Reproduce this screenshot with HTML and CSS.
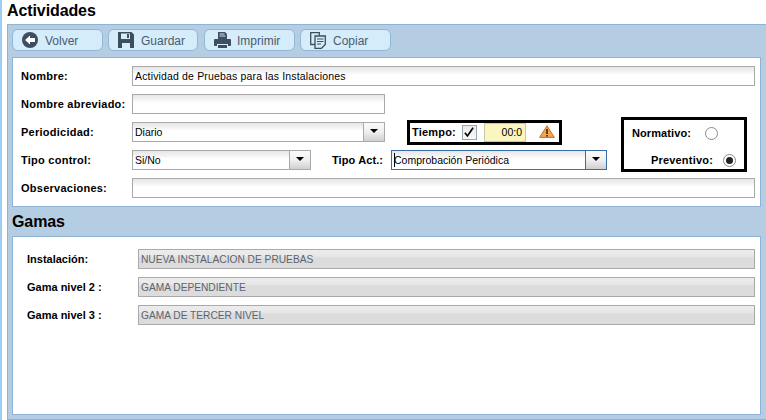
FILE: index.html
```html
<!DOCTYPE html>
<html lang="es">
<head>
<meta charset="utf-8">
<title>Actividades</title>
<link rel="stylesheet" href="styles.css">
</head>
<body>
<div class="page">
  <h1 class="page-title">Actividades</h1>
  <div class="panel">
    <div class="toolbar">
      <button class="tool tool-volver" type="button">
        <svg class="tool-icon" viewBox="0 0 16 16" width="16" height="16"><circle cx="8" cy="8" r="8" fill="#3d4e63"/><path d="M3 8l5-4.6V6h5v4H8v2.6z" fill="#fff"/></svg>
        <span class="tool-text">Volver</span>
      </button>
      <button class="tool tool-guardar" type="button">
        <svg class="tool-icon" viewBox="0 0 16 16" width="16" height="16"><path fill-rule="evenodd" d="M0 0h13.5L16 2.5V16H0zM3 1.500V7h9V1.500zM4 11v5h8v-5z" fill="#3d4e63"/><rect x="9" y="2" width="2" height="4" fill="#3d4e63"/></svg>
        <span class="tool-text">Guardar</span>
      </button>
      <button class="tool tool-imprimir" type="button">
        <svg class="tool-icon tool-icon-wide" viewBox="0 0 17 16" width="17" height="16"><path d="M4 0h7l2 2v5H4z" fill="#3d4e63"/><path d="M5.500 1.500h5v1h-5zM5.500 3.500h6v1h-6z" fill="#c9dcea"/><path d="M1 7h15q1 0 1 1v5q0 1-1 1h-2v-2H3v2H1q-1 0-1-1V8q0-1 1-1z" fill="#3d4e63"/><path d="M4 13h9v3H4z" fill="#3d4e63"/></svg>
        <span class="tool-text">Imprimir</span>
      </button>
      <button class="tool tool-copiar" type="button">
        <svg class="tool-icon" viewBox="0 0 16 17" width="16" height="17"><path d="M5 12.500H.7V.7h8.600v3" fill="none" stroke="#3d4e63" stroke-width="1.300"/><path d="M5 4h10.300v8.500l-4 4H5z" fill="#d5ecfb" stroke="#3d4e63" stroke-width="1.300"/><path d="M7 7h6.500M7 9.500h6.500M7 12h4" stroke="#3d4e63" stroke-width="1.200"/></svg>
        <span class="tool-text">Copiar</span>
      </button>
    </div>

    <section class="sheet sheet-form">
      <div class="row">
        <label class="label">Nombre:</label>
        <input class="field field-fill" type="text" value="Actividad de Pruebas para las Instalaciones">
      </div>
      <div class="row">
        <label class="label">Nombre abreviado:</label>
        <input class="field field-short" type="text">
      </div>
      <div class="split">
        <div class="split-rows">
          <div class="row">
            <label class="label">Periodicidad:</label>
            <div class="combo combo-periodicidad">
              <input class="combo-input" type="text" value="Diario">
              <span class="combo-btn"><span class="arrow"></span></span>
            </div>
            <div class="frame frame-tiempo">
              <span class="label-inline label-tiempo">Tiempo:</span>
              <span class="check"><svg viewBox="0 0 11 11" width="10" height="10"><path d="M1 6.200l2.800 3.600L10 .8" fill="none" stroke="#000" stroke-width="1.800"/></svg></span>
              <input class="time" type="text" value="00:0">
              <svg class="warn" viewBox="0 0 16 13" width="16" height="13"><path d="M8 .8L15.400 12.400H.6z" fill="#f0a550" stroke="#c9701f" stroke-width="1"/><rect x="7.100" y="4" width="1.800" height="5" fill="#5c3010"/><rect x="7.100" y="10" width="1.800" height="1.600" fill="#5c3010"/></svg>
            </div>
          </div>
          <div class="row">
            <label class="label">Tipo control:</label>
            <div class="combo combo-control">
              <input class="combo-input" type="text" value="Si/No">
              <span class="combo-btn"><span class="arrow"></span></span>
            </div>
            <label class="label-inline label-tipo">Tipo Act.:</label>
            <div class="combo combo-tipo">
              <span class="caret"></span>
              <input class="combo-input" type="text" value="Comprobación Periódica">
              <span class="combo-btn"><span class="arrow"></span></span>
            </div>
          </div>
        </div>
        <div class="frame frame-tipo">
          <div class="radio-row radio-row-first"><span class="label-inline">Normativo:</span><span class="radio"></span></div>
          <div class="radio-row"><span class="label-inline label-prev">Preventivo:</span><span class="radio radio-on"></span></div>
        </div>
      </div>
      <div class="row">
        <label class="label">Observaciones:</label>
        <input class="field field-fill" type="text">
      </div>
    </section>

    <h2 class="section-title">Gamas</h2>

    <section class="sheet sheet-gamas">
      <div class="row">
        <label class="label label-gama">Instalación:</label>
        <input class="field field-fill field-off" type="text" value="NUEVA INSTALACION DE PRUEBAS" disabled>
      </div>
      <div class="row">
        <label class="label label-gama">Gama nivel 2 :</label>
        <input class="field field-fill field-off" type="text" value="GAMA DEPENDIENTE" disabled>
      </div>
      <div class="row">
        <label class="label label-gama">Gama nivel 3 :</label>
        <input class="field field-fill field-off" type="text" value="GAMA DE TERCER NIVEL" disabled>
      </div>
    </section>
  </div>
</div>
</body>
</html>
```
FILE: styles.css
```css
* { box-sizing: border-box; }
html, body { margin: 0; padding: 0; height: 100%; overflow: hidden; background: #fff; }
body { font-family: "Liberation Sans", Arial, sans-serif; font-size: 11px; color: #000; }

.page { border-left: 2px solid #9ccdf5; height: 420px; padding-left: 5px; }
.page-title { margin: 0; height: 24px; line-height: 21px; font-size: 16px; font-weight: bold; letter-spacing: -.1px; }

.panel {
  height: 396px;
  background: #b5cde3;
  border: 1px solid #8fb3d4;
  border-right: 0;
  padding: 4px 5px 4px 4px;
  display: flex;
  flex-direction: column;
}

.toolbar { display: flex; gap: 5px; height: 22px; margin-bottom: 6px; flex: none; }
.tool {
  width: 91px;
  height: 22px;
  display: flex;
  align-items: center;
  padding: 0 0 0 9px;
  background: #d5ecfb;
  border: 1px solid #93b6d6;
  border-radius: 6px;
  font: 12px "Liberation Sans", Arial, sans-serif;
  color: #4a5b70;
}
.tool-guardar { width: 90px; }
.tool-imprimir { margin-left: 1px; }
.tool-icon { margin-right: 7px; flex: none; }
.tool-icon-wide { margin-right: 6px; }
.tool-text { padding-top: 2px; }

.sheet { background: #fff; border: 1px solid #8fb3d4; display: flex; flex-direction: column; gap: 8px; flex: none; }
.sheet-form { height: 150px; padding: 8px 5px 8px 8px; }
.sheet-gamas { flex: 1; padding: 12px 5px 0 14px; }

.section-title { margin: 0; height: 29px; flex: none; line-height: 30px; font-size: 16px; font-weight: bold; letter-spacing: -.1px; }

.row { display: flex; align-items: center; height: 20px; }
.label { width: 111px; flex: none; font-weight: bold; letter-spacing: .25px; }
.label-gama { letter-spacing: 0; }
.label-inline { font-weight: bold; letter-spacing: .1px; }
.label-tiempo { letter-spacing: .2px; }
.label-prev { letter-spacing: .2px; }

.field {
  height: 20px;
  border: 1px solid #aaa;
  padding: 0 2px;
  font: 10.5px "Liberation Sans", Arial, sans-serif;
  letter-spacing: .16px;
  color: #000;
  background: linear-gradient(#e6e6e6, #f4f4f4 5px, #fff 8px);
  outline: 0;
}
.field-fill { flex: 1; min-width: 0; }
.field-short { width: 253px; }
.field-off {
  font-size: 10.2px;
  letter-spacing: 0;
  color: #5c6470;
  background: linear-gradient(#ececec, #e8e8e8 6px, #dcdcdc 8px);
}

.split { display: flex; height: 48px; }
.split-rows { display: flex; flex-direction: column; gap: 8px; width: 489px; flex: none; }

.combo {
  position: relative;
  height: 20px;
  display: flex;
  flex: none;
  border: 1px solid #aaa;
  background: linear-gradient(#e6e6e6, #f4f4f4 5px, #fff 8px);
}
.combo-periodicidad { width: 253px; }
.combo-control { width: 179px; }
.combo-tipo { width: 216px; border-color: #3a6ea5; margin-left: 5px; }
.combo-input {
  flex: 1;
  min-width: 0;
  border: 0;
  padding: 0 2px;
  background: transparent;
  font: 10.5px "Liberation Sans", Arial, sans-serif;
  color: #000;
  outline: 0;
}
.combo-btn {
  width: 21px;
  flex: none;
  display: flex;
  align-items: center;
  justify-content: center;
  border-left: 1px solid #aaa;
  background: linear-gradient(#fafafa, #f0f0f0 50%, #cfcfcf);
}
.combo-tipo .combo-btn { border-left-color: #3a6ea5; }
.arrow { width: 0; height: 0; border-left: 4px solid transparent; border-right: 4px solid transparent; border-top: 4px solid #000; margin-bottom: 2px; }
.caret { position: absolute; left: 2px; top: 2px; width: 1px; height: 14px; background: #000; }

.label-tipo { margin-left: 21px; width: 54px; flex: none; }

.frame { border: 3px solid #000; background: #fff; flex: none; }
.frame-tiempo {
  display: flex;
  align-items: center;
  width: 155px;
  height: 25px;
  margin-left: 22px;
  padding-left: 2px;
}
.check {
  display: flex;
  align-items: center;
  justify-content: center;
  width: 15px;
  height: 15px;
  margin-left: 6px;
  border: 1px solid #9aa7b0;
  background: linear-gradient(#e8e8e8, #fafafa);
}
.time {
  width: 42px;
  height: 19px;
  margin-left: 7px;
  padding: 0 3px 0 0;
  border: 1px solid #c5c9b0;
  background: #fbf6bf;
  text-align: right;
  font: 10.5px "Liberation Sans", Arial, sans-serif;
  outline: 0;
}
.warn { margin-left: 13px; margin-top: -2px; }

.frame-tipo {
  width: 126px;
  height: 55px;
  margin-left: auto;
  margin-right: 8px;
  margin-top: -5px;
  padding: 4px 8px 0 0;
  display: flex;
  flex-direction: column;
  align-items: flex-end;
  justify-content: center;
  gap: 14px;
}
.radio-row { display: flex; align-items: center; gap: 10px; height: 13px; }
.radio-row-first { margin-right: 18px; gap: 14px; }
.radio { width: 13px; height: 13px; border-radius: 50%; border: 1px solid #8a8a8a; background: #fff; position: relative; }
.radio-on::after { content: ""; position: absolute; left: 2px; top: 2px; width: 7px; height: 7px; border-radius: 50%; background: #222; }
```
